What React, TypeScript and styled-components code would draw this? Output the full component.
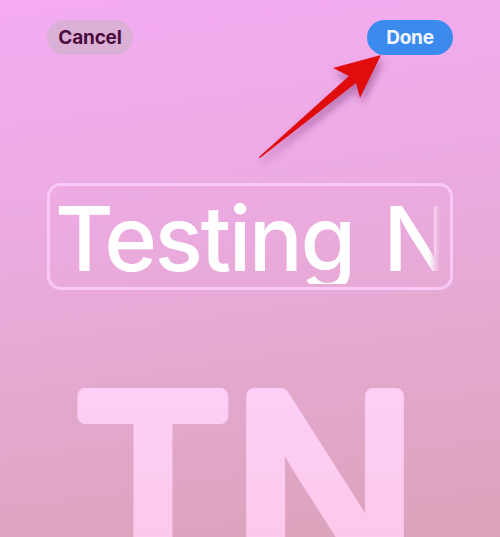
import React from "react";
import styled, { createGlobalStyle } from "styled-components";

const GlobalStyle = createGlobalStyle`
  html, body {
    margin: 0;
    padding: 0;
  }
  body {
    font-family: Inter, "Noto Sans", "Liberation Sans", sans-serif;
  }
`;

const Screen = styled.div`
  position: relative;
  width: 500px;
  height: 537px;
  overflow: hidden;
  background: linear-gradient(172deg, #f5acf2 0%, #eeabe6 30%, #e6a9d3 60%, #dba3ba 100%);
  display: flex;
  flex-direction: column;
`;

const TopBar = styled.div`
  display: flex;
  justify-content: space-between;
  align-items: center;
  padding: 20px 47px 0;
  flex-shrink: 0;
`;

const PillButton = styled.button<{ $primary?: boolean }>`
  width: 86px;
  height: 35px;
  border: none;
  border-radius: 18px;
  font-family: Inter, "Liberation Sans", sans-serif;
  font-weight: 700;
  font-size: 19px;
  letter-spacing: -0.2px;
  background: ${(p) => (p.$primary ? "#3b8bef" : "#dbb0d7")};
  color: ${(p) => (p.$primary ? "#f2f6ff" : "#4a0c3b")};
  padding: 0;
`;

const Field = styled.div`
  margin: 128px 47px 0;
  height: 107px;
  flex-shrink: 0;
  box-sizing: border-box;
  border: 3px solid #f9c8f6;
  border-radius: 14px;
  display: flex;
  align-items: center;
  overflow: hidden;
  padding: 0 10px 0 5px;
`;

const FieldText = styled.div`
  flex: 1;
  white-space: nowrap;
  overflow: hidden;
  font-size: 90px;
  font-weight: 500;
  letter-spacing: -2.5px;
  word-spacing: 8px;
  color: #ffffff;
  line-height: 1;
  padding-top: 4px;
  -webkit-mask-image: linear-gradient(90deg, #000 97%, transparent 100%);
  mask-image: linear-gradient(90deg, #000 97%, transparent 100%);
`;

const Monogram = styled.svg`
  display: block;
  margin-top: 60px;
  width: 500px;
  height: 200px;
  flex-shrink: 0;
`;

const ArrowLayer = styled.svg`
  position: absolute;
  left: 0;
  top: 0;
  width: 500px;
  height: 537px;
  pointer-events: none;
`;

export default function App() {
  return (
    <>
      <GlobalStyle />
      <Screen>
        <TopBar>
          <PillButton>Cancel</PillButton>
          <PillButton $primary>Done</PillButton>
        </TopBar>
        <Field>
          <FieldText>Testing N</FieldText>
        </Field>
        <Monogram viewBox="0 0 500 200">
          <defs>
            <linearGradient id="mono" x1="0" y1="0" x2="0" y2="1">
              <stop offset="0" stopColor="#fdd1fb" />
              <stop offset="1" stopColor="#fcc5e4" />
            </linearGradient>
          </defs>
          <text
            x="246"
            y="224"
            textAnchor="middle"
            fontFamily="Inter, 'Liberation Sans', sans-serif"
            fontWeight={400}
            fontSize={245}
            letterSpacing="1"
            fill="url(#mono)"
            stroke="url(#mono)"
            strokeWidth={16}
            strokeLinejoin="round"
          >
            TN
          </text>
        </Monogram>
        <ArrowLayer viewBox="0 0 500 537">
          <defs>
            <filter id="shadow" x="-30%" y="-30%" width="160%" height="160%">
              <feDropShadow dx="2" dy="5" stdDeviation="4" floodColor="#5a1f55" floodOpacity="0.45" />
            </filter>
          </defs>
          <polygon
            points="259,157 349,76 333,68 381,55 360,98 356,83 260,158"
            fill="#e00c0c"
            filter="url(#shadow)"
          />
        </ArrowLayer>
      </Screen>
    </>
  );
}
